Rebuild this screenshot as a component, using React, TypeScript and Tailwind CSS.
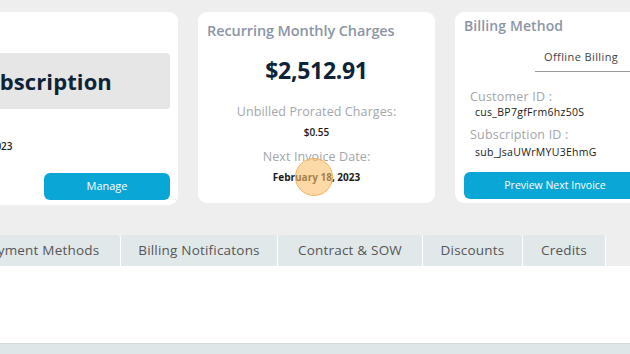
import React from "react";

const font = { fontFamily: '"Open Sans", "Liberation Sans", sans-serif' };

export default function App() {
  return (
    <div className="w-[630px] h-[354px] overflow-hidden bg-[#eeeeee] relative" style={font}>
      <div className="flex gap-[20px] ml-[-59px] pt-[12px] items-start">
        {/* Card 1 */}
        <div className="w-[237px] h-[193px] shrink-0 bg-white rounded-[9px] px-[8px] pt-[41px] flex flex-col">
          <div className="h-[56px] bg-[#e6e6e6] rounded-[4px] flex items-center pl-[24px]">
            <span className="text-[22px] font-bold text-[#0d2438] tracking-[0.1px]">Subscription</span>
          </div>
          <div className="mt-[31px] pl-[4px] text-[10px] font-semibold text-[#1a1a1a] leading-[12px]">Feb 18, 2023</div>
          <div className="mt-[21px] flex justify-end">
            <button className="w-[126px] h-[27px] rounded-[6px] bg-[#0aa6d6] text-white text-[11px] font-medium">Manage</button>
          </div>
        </div>
        {/* Card 2 */}
        <div className="w-[237px] h-[191px] shrink-0 bg-white rounded-[9px] px-[9px] pt-[10px] flex flex-col relative">
          <div className="text-[14.5px] font-semibold text-[#8b95a6] leading-[18px] tracking-[-0.1px]">Recurring Monthly Charges</div>
          <div className="mt-[17px] text-center text-[23px] font-bold text-[#0d2438] leading-[26px] tracking-[-0.3px]">$2,512.91</div>
          <div className="mt-[22px] text-center text-[12.5px] text-[#a3a6aa] leading-[14px] tracking-[0.1px]">Unbilled Prorated Charges:</div>
          <div className="mt-[7px] text-center text-[10px] font-semibold text-[#1a1a1a] leading-[12px]">$0.55</div>
          <div className="mt-[12px] text-center text-[12.5px] text-[#a3a6aa] leading-[14px] tracking-[0.1px]">Next Invoice Date:</div>
          <div className="mt-[7px] text-center text-[10px] font-bold text-[#1a1a1a] leading-[12px]">February 18, 2023</div>
          <div className="absolute left-[97px] top-[146px] w-[38px] h-[38px] rounded-full bg-[#fbbf6a]/60 border border-[#f2b25c]" />
        </div>
        {/* Card 3 */}
        <div className="w-[237px] h-[191px] shrink-0 bg-white rounded-[9px] px-[9px] pt-[5px] flex flex-col">
          <div className="text-[14px] font-semibold text-[#8b95a6] leading-[18px] tracking-[0.1px]">Billing Method</div>
          <div className="mt-[8px] flex">
            <div className="ml-[71px] w-[130px] h-[29px] border-b border-[#9a9a9a] flex items-center pl-[9px]">
              <span className="text-[11px] font-medium text-[#444] tracking-[0.4px]">Offline Billing</span>
            </div>
          </div>
          <div className="mt-[17px] pl-[6px] text-[12.5px] text-[#a3a6aa] leading-[15px] tracking-[0.2px]">Customer ID :</div>
          <div className="mt-[2px] pl-[11px] text-[10.5px] font-medium text-[#1a1a1a] leading-[12px] tracking-[0.3px]">cus_BP7gfFrm6hz50S</div>
          <div className="mt-[9px] pl-[6px] text-[12.5px] text-[#a3a6aa] leading-[15px] tracking-[0.2px]">Subscription ID :</div>
          <div className="mt-[4px] pl-[11px] text-[10.5px] font-medium text-[#1a1a1a] leading-[12px] tracking-[0.3px]">sub_JsaUWrMYU3EhmG</div>
          <button className="mt-[14px] w-[182px] h-[27px] rounded-[6px] bg-[#0aa6d6] text-white text-[10.5px] font-medium">Preview Next Invoice</button>
        </div>
      </div>

      {/* Tabs */}
      <div className="mt-[30px] flex ml-[-39px] h-[31px]">
        {[
          ["Payment Methods", 160],
          ["Billing Notificatons", 157],
          ["Contract & SOW", 145],
          ["Discounts", 100],
          ["Credits", 83],
        ].map(([label, w]) => (
          <div
            key={label as string}
            className="shrink-0 h-full bg-[#e1e8ea] border-r border-white rounded-t-[3px] flex items-center justify-center text-[13.5px] text-[#555] font-medium tracking-[0.2px] pb-[1px]"
            style={{ width: w as number }}
          >
            {label}
          </div>
        ))}
      </div>
      <div className="h-[77px] bg-white" />
      <div className="h-[11px] bg-[#dfe6e8] border-t border-[#d3dadc]" />
    </div>
  );
}
